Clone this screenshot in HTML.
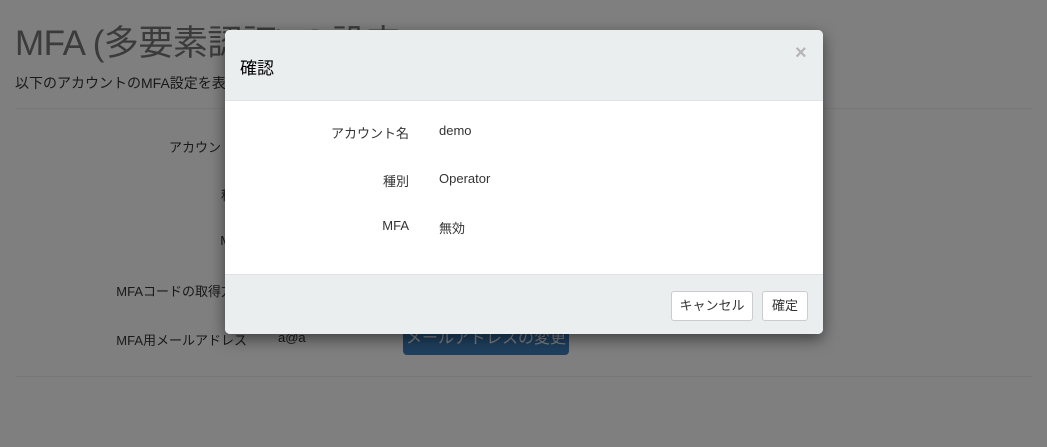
<!DOCTYPE html>
<html><head><meta charset="utf-8"><style>
*{margin:0;padding:0;box-sizing:border-box}
body{width:1047px;height:447px;overflow:hidden;background:#fff;font-family:"Liberation Sans","Noto Sans CJK JP",sans-serif;position:relative;color:#333;font-size:13px}
.abs{position:absolute;white-space:nowrap}
h1{position:absolute;left:15px;top:15px;font-size:35px;font-weight:400;color:#777;white-space:nowrap;letter-spacing:-0.5px}
.hr{position:absolute;left:15px;width:1017px;height:1px;background:#eee}
.lbl{position:absolute;right:800px;text-align:right;white-space:nowrap}
.btnb{position:absolute;left:403px;top:322px;width:166px;height:33px;background:#3d7ebc;border-radius:4px;color:#fff;font-size:16px;text-align:center;line-height:33px}
.bd{position:absolute;left:0;top:0;width:1047px;height:447px;background:rgba(0,0,0,.5)}
.modal{position:absolute;left:225px;top:30px;width:598px;height:304px;background:#fff;border-radius:5px;overflow:hidden;box-shadow:0 5px 15px rgba(0,0,0,.5)}
.mh{position:absolute;left:0;top:0;width:100%;height:71px;background:#ebeeef;border-bottom:1px solid #e0e3e4}
.mf{position:absolute;left:0;top:244px;width:100%;height:60px;background:#ebeeef;border-top:1px solid #e0e3e4}
.ml{position:absolute;right:414px;text-align:right;white-space:nowrap;font-size:13px;color:#333}
.mv{position:absolute;left:214px;white-space:nowrap;font-size:13px;color:#333}
.btn{position:absolute;top:16px;height:30px;border:1px solid #ccc;border-radius:3px;background:#fff;font-size:13px;line-height:28px;text-align:center;color:#333}
</style></head><body>
<h1>MFA (多要素認証) の設定</h1>
<div class="abs" style="left:15px;top:73px;font-size:14px">以下のアカウントのMFA設定を表示しています。</div>
<div class="hr" style="top:108px"></div>
<div class="lbl" style="top:137px">アカウント名</div>
<div class="lbl" style="top:185px">種別</div>
<div class="lbl" style="top:233px">MFA</div>
<div class="lbl" style="top:281px">MFAコードの取得方法</div>
<div class="lbl" style="top:330px">MFA用メールアドレス</div>
<div class="abs" style="left:278px;top:330px">a@a</div>
<div class="btnb">メールアドレスの変更</div>
<div class="hr" style="top:376px"></div>
<div class="bd"></div>
<div class="modal">
 <div class="mh">
  <div class="abs" style="left:15px;top:24px;font-size:17px;color:#000">確認</div>
  <div class="abs" style="left:570px;top:12px;font-size:20px;font-weight:bold;color:#b5b5b5">×</div>
 </div>
 <div class="ml" style="top:93px">アカウント名</div><div class="mv" style="top:93px">demo</div>
 <div class="ml" style="top:141px">種別</div><div class="mv" style="top:141px">Operator</div>
 <div class="ml" style="top:188px">MFA</div><div class="mv" style="top:188px">無効</div>
 <div class="mf">
  <div class="btn" style="left:446px;width:82px">キャンセル</div>
  <div class="btn" style="left:537px;width:46px">確定</div>
 </div>
</div>
</body></html>
